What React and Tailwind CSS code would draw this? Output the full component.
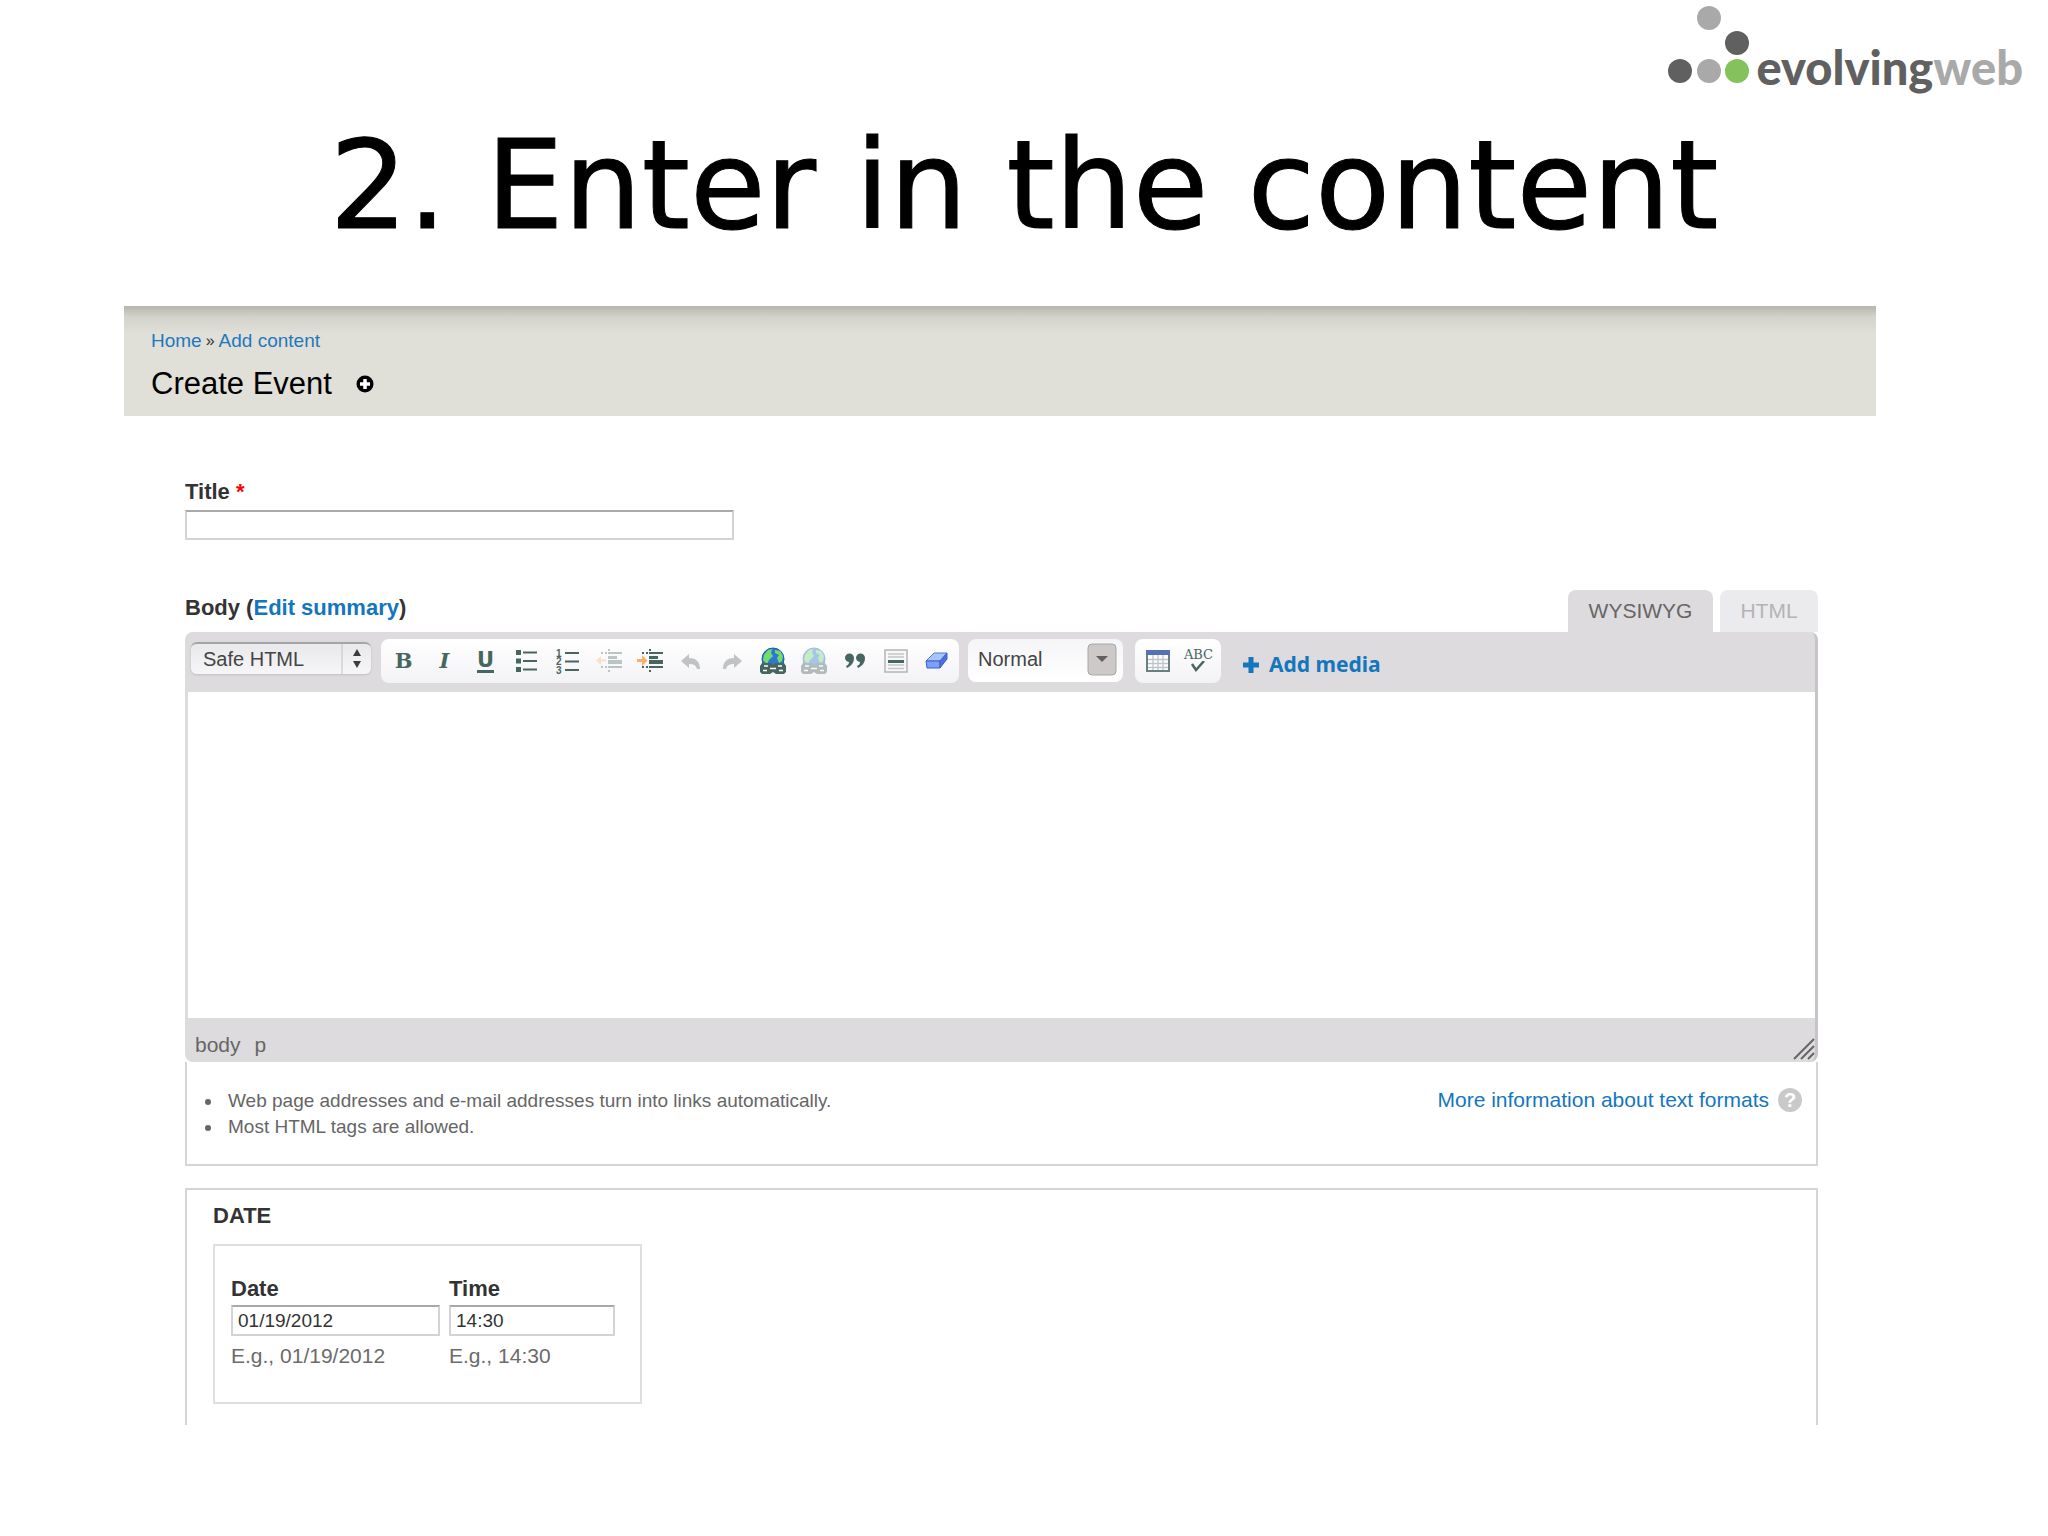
import React from 'react'

const DARK = '#47665f'

function Logo() {
  return (
    <a href="#" className="flex items-start">
      <svg width="82" height="78" viewBox="0 0 82 78">
        <circle cx="41" cy="12" r="12" fill="#a9a9a9" />
        <circle cx="69" cy="37" r="12" fill="#606060" />
        <circle cx="12" cy="65" r="12" fill="#606060" />
        <circle cx="41" cy="65" r="12" fill="#a9a9a9" />
        <circle cx="69" cy="65" r="12" fill="#84c35c" />
      </svg>
      <span className="ml-[7px] mt-[33px] font-[Lato,sans-serif] text-[47px] leading-[56px] font-black text-[#606060]">
        evolving<span className="text-[#a9a9a9]">web</span>
      </span>
    </a>
  )
}

function BulletList() {
  return (
    <svg width="24" height="24" viewBox="0 0 24 24" fill={DARK}>
      {[1, 9.5, 18].map((y) => (
        <g key={y}>
          <rect x="1" y={y} width="5" height="5" />
          <rect x="8" y={y + 1.5} width="14" height="2" />
        </g>
      ))}
    </svg>
  )
}

function NumberList() {
  return (
    <svg width="26" height="26" viewBox="0 0 26 26" fill={DARK}>
      {[1, 2, 3].map((n) => (
        <g key={n}>
          <text x="1" y={n * 8.5} fontSize="10" fontWeight="bold" fontFamily="Liberation Sans, sans-serif">{n}</text>
          <rect x="10" y={n * 8.5 - 4.5} width="14" height="2" />
        </g>
      ))}
    </svg>
  )
}

function Indent({ flip }) {
  return (
    <svg width="28" height="26" viewBox="0 0 28 26" opacity={flip ? 0.35 : 1}>
      <g fill={DARK}>
        <rect x="6" y="4" width="2" height="2" />
        <rect x="10" y="4" width="2" height="2" />
        <rect x="13" y="1" width="2" height="2" />
        <rect x="13" y="4" width="14" height="2" />
        <rect x="13" y="8" width="9" height="3" />
        <rect x="13" y="12" width="14" height="4" />
        <rect x="13" y="18" width="14" height="2" />
        <rect x="6" y="18" width="2" height="2" />
        <rect x="10" y="18" width="2" height="2" />
        <rect x="13" y="22" width="2" height="2" />
      </g>
      {flip ? (
        <path d="M11 11.500H6V8L1 12.500L6 17V13.500H11Z" fill="#f8b66b" />
      ) : (
        <path d="M1 11H6V7L11.500 12.500L6 18V14H1Z" fill="#f8b06a" />
      )}
    </svg>
  )
}

function Arrow({ flip }) {
  return (
    <svg width="22" height="20" viewBox="0 0 22 20" className={flip ? '-scale-x-100' : ''}>
      <path d="M1 10L9 3V7C15 7 20 10 20 18H17C16 14 13 13 9 13V17Z" fill="#c0c3c4" />
    </svg>
  )
}

function Globe({ off }) {
  return (
    <svg width="28" height="28" viewBox="0 0 28 28" opacity={off ? 0.4 : 1}>
      <circle cx="14" cy="12" r="11" fill="#2f78cf" stroke="#1d5cb0" />
      <path d="M5 8L9 3L13 2L12 6L14 9L10 13L8 17L4 13Z" fill="#74dc6c" />
      <path d="M16 3L21 4L24 9L23 14L20 16L18 11L20 8L16 6Z" fill="#74dc6c" />
      <path d="M3 16H12L14 18L16 16H25L27 19V25L25 27H17L14 25L11 27H3L1 25V19Z" fill={DARK} />
      <path d="M5 19H9M4 23.500H8M11 21.500H17M19 19H23M20 23.500H24" stroke="#fff" strokeWidth="1.500" />
    </svg>
  )
}

function Quote() {
  return (
    <svg width="22" height="18" viewBox="0 0 22 18" fill={DARK}>
      <path d="M1 6A4.500 4.500 0 0 1 10 6C10 11 7 14 3 16L2 14C4 13 5 12 5 10A4.500 4.500 0 0 1 1 6Z" />
      <path d="M12 6A4.500 4.500 0 0 1 21 6C21 11 18 14 14 16L13 14C15 13 16 12 16 10A4.500 4.500 0 0 1 12 6Z" />
    </svg>
  )
}

function Rule() {
  return (
    <svg width="24" height="24" viewBox="0 0 24 24">
      <rect x="1" y="1" width="22" height="22" fill="#f7f7f8" stroke="#b4b5b7" strokeWidth="1.500" />
      <path d="M4 5H20M4 8H20M4 16H20M4 19.500H20" stroke="#c4c6c8" strokeWidth="1.300" />
      <rect x="4" y="11" width="16" height="3" fill={DARK} />
    </svg>
  )
}

function Eraser() {
  return (
    <svg width="24" height="18" viewBox="0 0 24 18" strokeLinejoin="round">
      <path d="M9 1H22L15 9H1Z" fill="#a9c4fb" stroke="#5379dd" />
      <path d="M1 9H15V16H2Z" fill="#7ca0f4" stroke="#3d5fd0" />
      <path d="M22 1V7L15 16V9Z" fill="#4d6fdd" stroke="#3d5fd0" />
    </svg>
  )
}

function TableIcon() {
  return (
    <svg width="24" height="24" viewBox="0 0 24 24">
      <rect x="1" y="2" width="22" height="20" fill="#fff" stroke="#6c7f80" strokeWidth="2" />
      <rect x="0" y="1" width="24" height="5" fill="#5572b5" />
      <path d="M2 10.500H22M2 14.500H22M2 18.500H22M7 6V21M12 6V21M17 6V21" stroke="#bcc5c6" strokeWidth="1.300" />
    </svg>
  )
}

function SpellCheck() {
  return (
    <span className="flex flex-col items-center font-['DejaVu_Serif',serif] text-[13px] leading-[12px] text-[#47665f]">
      ABC
      <svg width="16" height="12" viewBox="0 0 16 12" fill="none">
        <path d="M2 3L6 9L14 0" stroke={DARK} strokeWidth="2.500" />
      </svg>
    </span>
  )
}

const letter = "font-['DejaVu_Serif',serif] text-[21px] leading-6 font-bold text-[#47665f]"

const tools = [
  { label: 'Bold', icon: <span className={letter}>B</span> },
  { label: 'Italic', icon: <span className={`${letter} italic`}>I</span> },
  {
    label: 'Underline',
    icon: (
      <span className="border-b-3 border-[#47665f] font-['DejaVu_Sans',sans-serif] text-[21px] leading-5 font-bold text-[#47665f]">
        U
      </span>
    ),
  },
  { label: 'Bullet list', icon: <BulletList /> },
  { label: 'Numbered list', icon: <NumberList /> },
  { label: 'Outdent', icon: <Indent flip /> },
  { label: 'Indent', icon: <Indent /> },
  { label: 'Undo', icon: <Arrow /> },
  { label: 'Redo', icon: <Arrow flip /> },
  { label: 'Link', icon: <Globe /> },
  { label: 'Unlink', icon: <Globe off /> },
  { label: 'Block quote', icon: <Quote /> },
  { label: 'Horizontal line', icon: <Rule /> },
  { label: 'Remove format', icon: <Eraser /> },
]

const insertTools = [
  { label: 'Table', icon: <TableIcon /> },
  { label: 'Check spelling', icon: <SpellCheck /> },
]

function ToolGroup({ items }) {
  return (
    <div className="flex h-11 rounded-lg bg-linear-to-b from-white to-[#f3f3f6] px-[2px]">
      {items.map((item) => (
        <button key={item.label} type="button" aria-label={item.label} className="flex w-[41px] items-center justify-center">
          {item.icon}
        </button>
      ))}
    </div>
  )
}

const inputStyle = 'block border-2 border-[#d3d3d5] border-t-[#a9a9ab] bg-white px-[5px] text-[19px] text-[#333]'

function Toolbar() {
  return (
    <div className="flex h-[60px] items-start pt-[7px] pl-[3px] text-[20px] text-[#444]">
      <div className="relative mt-[3px] mr-[10px]">
        <select
          aria-label="Text format"
          className="block h-8 w-[180px] appearance-none rounded-md border-t-2 border-[#a5a4a6] bg-linear-to-b from-[#e9e9eb] to-[#f6f6f8] pb-[3px] pl-3 shadow-sm"
        >
          <option>Safe HTML</option>
        </select>
        <svg width="30" height="30" viewBox="0 0 30 30" className="pointer-events-none absolute top-0.5 right-0">
          <path d="M1 0V30" stroke="#c2c2c4" />
          <path d="M16 5L20 12H12ZM16 24L20 17H12Z" fill="#3c3c3c" />
        </svg>
      </div>
      <ToolGroup items={tools} />
      <div className="relative mr-3 ml-[9px]">
        <select
          aria-label="Paragraph style"
          className="block h-[43px] w-[155px] appearance-none rounded-lg bg-linear-to-b from-[#f5f5f8] to-white pb-[3px] pl-[10px]"
        >
          <option>Normal</option>
        </select>
        <svg width="30" height="33" viewBox="0 0 30 33" className="pointer-events-none absolute top-1 right-[6px]">
          <rect x="1" y="1" width="28" height="31" rx="4" fill="#cdc9c9" stroke="#aaa6a6" />
          <path d="M9 13H21L15 19Z" fill="#645e5e" />
        </svg>
      </div>
      <ToolGroup items={insertTools} />
      <a
        href="#"
        className="ml-[22px] flex h-[52px] items-center gap-[10px] font-['Noto_Sans',sans-serif] text-[21px] font-bold text-[#1476bd]"
      >
        <svg width="16" height="16" viewBox="0 0 16 16" fill="currentColor">
          <path d="M5.500 0H10.500V5.500H16V10.500H10.500V16H5.500V10.500H0V5.500H5.500Z" />
        </svg>
        Add media
      </a>
    </div>
  )
}

function DateField({ id, label, value, width }) {
  return (
    <div className={width}>
      <label htmlFor={id} className="block text-[22px] leading-7 font-bold text-[#333]">{label}</label>
      <input id={id} type="text" defaultValue={value} className={`${inputStyle} mt-[2px] h-[31px] w-full`} />
      <p className="mt-[6px] text-[21px] leading-7 text-[#6b6b6b]">E.g., {value}</p>
    </div>
  )
}

function EventForm() {
  return (
    <form className="pt-[62px] pr-[58px] pl-[61px]">
      <label htmlFor="title" className="block text-[22px] leading-7 font-bold text-[#333]">
        Title <span className="text-[#f00]">*</span>
      </label>
      <input id="title" type="text" className={`${inputStyle} mt-1 h-[30px] w-[549px]`} />

      <div className="mt-[50px] flex items-start justify-between">
        <label htmlFor="body" className="pt-1 text-[22px] leading-7 font-bold text-[#333]">
          Body (<a href="#" className="text-[#1476bd]">Edit summary</a>)
        </label>
        <div className="flex gap-[7px] text-[21px]">
          <button type="button" className="h-[42px] w-[145px] rounded-t-lg bg-[#dddbde] text-[#666]">WYSIWYG</button>
          <button type="button" className="h-[42px] w-[98px] rounded-t-lg bg-[#ebeaec] text-[#b3b4b5]">HTML</button>
        </div>
      </div>

      <div className="rounded-lg border-r-3 border-l-3 border-r-[#c6c4c8] border-l-[#dddbde] bg-[#dddbde]">
        <Toolbar />
        <textarea id="body" className="block h-[326px] w-full resize-none bg-white" />
        <div className="flex h-11 items-end justify-between pl-[7px] text-[21px] leading-7 text-[#666]">
          <div className="flex gap-[14px] pb-[3px]">
            <span>body</span>
            <span>p</span>
          </div>
          <svg width="22" height="24" viewBox="0 0 22 24" fill="none" stroke="#666" strokeWidth="2">
            <path d="M1 21L21 1M8 21L21 8M15 21L21 15" />
          </svg>
        </div>
      </div>

      <div className="flex justify-between border-x-2 border-b-2 border-[#d5d4d7] pt-[26px] pr-[14px] pb-6 pl-9">
        <ul className="list-disc text-[19px] leading-[26px] text-[#666]">
          <li className="pl-[5px]">Web page addresses and e-mail addresses turn into links automatically.</li>
          <li className="pl-[5px]">Most HTML tags are allowed.</li>
        </ul>
        <a href="#" className="flex h-6 items-center gap-[9px] text-[21px] leading-6 text-[#1476bd]">
          More information about text formats
          <span className="flex size-6 items-center justify-center rounded-full bg-[#c9c9c9] text-[20px] font-bold text-white">?</span>
        </a>
      </div>

      <section className="mt-[22px] border-x-2 border-t-2 border-[#d5d4d7] pt-3 pb-[21px] pl-[26px]">
        <h3 className="text-[22px] leading-7 font-bold text-[#333]">DATE</h3>
        <div className="mt-[14px] inline-flex gap-[9px] border-2 border-[#dfdee1] pt-[29px] pr-[25px] pb-8 pl-4 align-top">
          <DateField id="date" label="Date" value="01/19/2012" width="w-[209px]" />
          <DateField id="time" label="Time" value="14:30" width="w-[166px]" />
        </div>
      </section>
    </form>
  )
}

function App() {
  return (
    <div className="min-h-screen bg-white font-['Liberation_Sans',Arial,sans-serif]">
      <header className="flex h-[114px] justify-end pt-[6px] pr-[25px]">
        <Logo />
      </header>
      <h1 className="text-center font-['DejaVu_Sans',sans-serif] text-[123px] leading-[144px] text-black [-webkit-text-stroke:1px_black]">
        2. Enter in the content
      </h1>

      <main className="mt-12 mr-[172px] ml-[124px]">
        <div className="bg-[#e0e0d9] bg-linear-to-b from-[#b6b6af] via-[#d3d3cc] via-10% to-[#e0e0d9] to-25% pt-[23px] pb-3 pl-[27px]">
          <nav className="flex gap-1 text-[19px] leading-6 text-[#1f78bb]">
            <a href="#">Home</a>
            <span className="text-[16px] text-[#333]">»</span>
            <a href="#">Add content</a>
          </nav>
          <div className="mt-[11px] flex items-center gap-6">
            <h2 className="text-[31px] leading-10 text-black">Create Event</h2>
            <button type="button" aria-label="Add to shortcuts">
              <svg width="18" height="18" viewBox="0 0 18 18">
                <circle cx="9" cy="9" r="8.500" fill="#000" />
                <path d="M9 4V14M4 9H14" stroke="#fff" strokeWidth="3.500" />
              </svg>
            </button>
          </div>
        </div>
        <EventForm />
      </main>
    </div>
  )
}

export default App
